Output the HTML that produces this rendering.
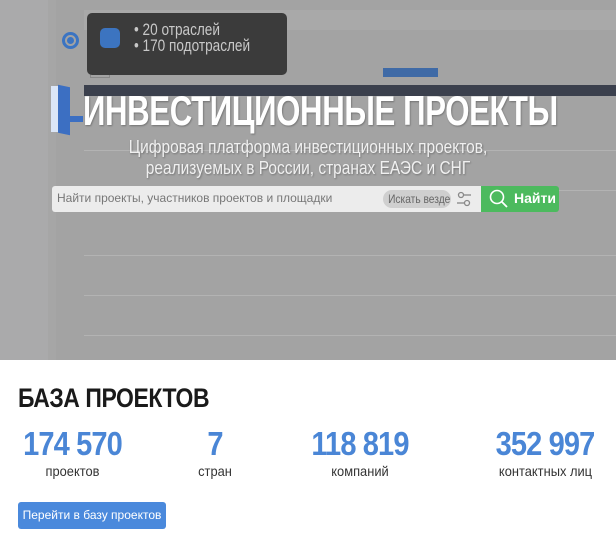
<!DOCTYPE html>
<html><head><meta charset="utf-8"><style>
*{margin:0;padding:0;box-sizing:border-box}
body{width:616px;height:547px;background:#fff;position:relative;overflow:hidden;font-family:"Liberation Sans",sans-serif}
.a{position:absolute;white-space:nowrap}
.top{left:0;top:0;width:616px;height:360px;background:#a3a3a3;overflow:hidden}
.row{left:84px;width:532px;height:1px;background:#b3b3b3}
.num{color:#4a86d6;font-weight:bold;font-size:33px;text-align:center;letter-spacing:-1px;transform:scaleX(.88)}
.lab{color:#333;font-size:14px;text-align:center;transform:scaleX(.92)}
</style></head><body>
<div class="a top">
  <div class="a" style="left:0;top:0;width:48px;height:360px;background:#aaaaab"></div>
  <div class="a" style="left:48px;top:0;width:8px;height:360px;background:#a6a6a6"></div>
  <div class="a" style="left:84px;top:10px;width:532px;height:20px;background:#a9a9a9"></div>
  <div class="a" style="left:84px;top:85px;width:532px;height:11px;background:#3b404d"></div>
  <div class="a" style="left:383px;top:68px;width:55px;height:9px;background:#3f6aa6"></div>
  <div class="a" style="left:90px;top:65px;width:20px;height:13px;border:1px solid #888"></div>
  <div class="a row" style="top:150px"></div>
  <div class="a row" style="top:190px"></div>
  <div class="a row" style="top:255px"></div>
  <div class="a row" style="top:295px"></div>
  <div class="a row" style="top:335px"></div>
  <div class="a" style="left:62px;top:32px;width:17px;height:17px;border-radius:50%;border:3px solid #3b74c2"></div>
  <div class="a" style="left:67px;top:37px;width:7px;height:7px;border-radius:50%;background:#3b74c2"></div>
  <div class="a" style="left:87px;top:13px;width:200px;height:62px;background:#3b3b3b;border-radius:5px"></div>
  <div class="a" style="left:100px;top:28px;width:20px;height:20px;background:#3c74c0;border-radius:5px"></div>
  <div class="a" style="left:134px;top:22px;color:#c8c8c8;font-size:17px;line-height:16px;transform:scaleX(.8);transform-origin:left">• 20 отраслей<br>• 170 подотраслей</div>
  <div class="a" style="left:65px;top:116px;width:18px;height:6px;background:#3c6fc2"></div>
  <div class="a" style="left:51px;top:86px;width:8px;height:46px;background:#dbe6f7"></div>
  <div class="a" style="left:58px;top:86px;width:12px;height:48px;background:#3c6fc2;transform:skewY(12deg)"></div>
  <div class="a" style="left:83px;top:87px;color:#fff;font-size:42px;font-weight:bold;letter-spacing:-0.5px;text-shadow:1px 1px 2px rgba(0,0,0,.3);transform:scaleX(.742);transform-origin:left">ИНВЕСТИЦИОННЫЕ ПРОЕКТЫ</div>
  <div class="a" style="left:0;width:616px;top:137px;color:#f0f0f0;font-size:18px;line-height:21px;text-align:center;text-shadow:1px 1px 2px rgba(0,0,0,.3);transform:scaleX(.86)">Цифровая платформа инвестиционных проектов,<br>реализуемых в России, странах ЕАЭС и СНГ</div>
  <div class="a" style="left:52px;top:186px;width:429px;height:26px;background:#ececec;border-radius:3px 0 0 3px"></div>
  <div class="a" style="left:57px;top:191px;color:#777;font-size:12px">Найти проекты, участников проектов и площадки</div>
  <div class="a" style="left:383px;top:190px;width:68px;height:18px;background:#cfcfcf;border-radius:9px"></div>
  <div class="a" style="left:383px;top:190px;width:68px;color:#666;font-size:12px;line-height:18px;text-align:center;transform:scaleX(.85)">Искать везде</div>
  <svg class="a" style="left:457px;top:190px" width="14" height="18"><circle cx="4" cy="5" r="2.5" fill="none" stroke="#888" stroke-width="1.3"/><line x1="7" y1="5" x2="14" y2="5" stroke="#888" stroke-width="1.3"/><circle cx="10" cy="13" r="2.5" fill="none" stroke="#888" stroke-width="1.3"/><line x1="0" y1="13" x2="7" y2="13" stroke="#888" stroke-width="1.3"/></svg>
  <div class="a" style="left:481px;top:186px;width:78px;height:26px;background:#4cba5e;border-radius:0 3px 3px 0"></div>
  <svg class="a" style="left:489px;top:189px" width="20" height="20"><circle cx="8" cy="8" r="6.5" fill="none" stroke="#fff" stroke-width="1.6"/><line x1="13" y1="13" x2="18" y2="18" stroke="#fff" stroke-width="1.8"/></svg>
  <div class="a" style="left:514px;top:190px;color:#fff;font-size:14px;font-weight:bold">Найти</div>
</div>
<div class="a" style="left:18px;top:383px;color:#1a1a1a;font-size:27px;font-weight:bold;letter-spacing:-0.5px;transform:scaleX(.85);transform-origin:left">БАЗА ПРОЕКТОВ</div>
<div class="a num" style="left:0;width:145px;top:425px">174 570</div>
<div class="a lab" style="left:10px;width:125px;top:463px">проектов</div>
<div class="a num" style="left:180px;width:70px;top:425px">7</div>
<div class="a lab" style="left:180px;width:70px;top:463px">стран</div>
<div class="a num" style="left:285px;width:150px;top:425px">118 819</div>
<div class="a lab" style="left:295px;width:130px;top:463px">компаний</div>
<div class="a num" style="left:470px;width:150px;top:425px">352 997</div>
<div class="a lab" style="left:478px;width:135px;top:463px">контактных лиц</div>
<div class="a" style="left:18px;top:502px;width:148px;height:27px;background:#4a89dc;border-radius:3px;color:#fff;font-size:12px;line-height:27px;text-align:center">Перейти в базу проектов</div>
</body></html>
